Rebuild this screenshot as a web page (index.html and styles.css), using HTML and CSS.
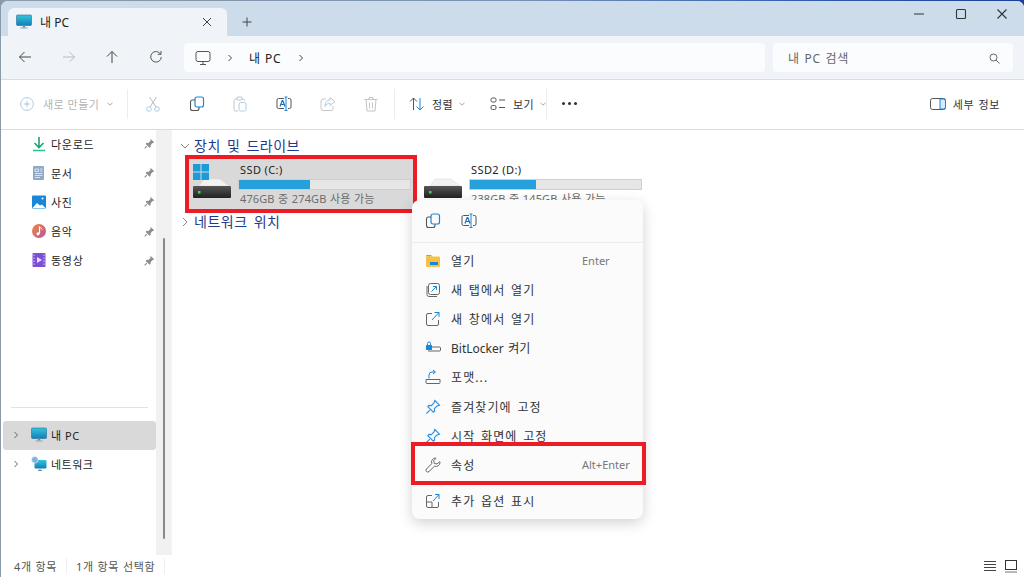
FILE: index.html
```html
<!DOCTYPE html>
<html lang="ko">
<head>
  <meta charset="UTF-8">
  <title>내 PC</title>
  <link rel="stylesheet" href="styles.css">
</head>
<body>

<svg class="defs" width="0" height="0">
  <defs>
    <linearGradient id="screen" x1="0" y1="0" x2="0" y2="1">
      <stop offset="0" stop-color="#35c4dd"/>
      <stop offset="1" stop-color="#0f7fb8"/>
    </linearGradient>
    <linearGradient id="hdd" x1="0" y1="0" x2="0" y2="1">
      <stop offset="0" stop-color="#555"/>
      <stop offset="1" stop-color="#222"/>
    </linearGradient>
    <linearGradient id="music" x1="0" y1="0" x2="1" y2="1">
      <stop offset="0" stop-color="#ef8a3c"/>
      <stop offset="1" stop-color="#b9549c"/>
    </linearGradient>
    <symbol id="pc" viewBox="0 0 16 16">
      <rect x="0.5" y="1" width="15" height="10.5" rx="1" fill="url(#screen)" stroke="#2a6f90" stroke-width="0.6"/>
      <rect x="6.8" y="11.5" width="2.4" height="2" fill="#6d8fa3"/>
      <rect x="4.5" y="13.5" width="7" height="1" fill="#8aa3b3"/>
    </symbol>
    <symbol id="pin" viewBox="0 0 12 12">
      <path d="M7 1.5l3.5 3.5-1.6.6-1.9 2 .1 1.7-1 .7-3.6-3.6.7-1 1.7.1 2-1.9z" fill="#8b8f94"/>
      <path d="M3.6 8.4L1.5 10.5" stroke="#8b8f94" fill="none"/>
    </symbol>
    <symbol id="copy" viewBox="0 0 16 16">
      <rect x="6" y="1" width="8.5" height="10" rx="2" fill="none" stroke="#1a86d8" stroke-width="1.2"/>
      <path d="M6 4H3.5A2 2 0 0 0 1.5 6v6.5a2 2 0 0 0 2 2H8a2 2 0 0 0 2-2V11" fill="none" stroke="#555" stroke-width="1.1"/>
    </symbol>
    <symbol id="rename" viewBox="0 0 16 16">
      <path d="M8 2.5H2.5a1.5 1.5 0 0 0-1.5 1.5v7a1.5 1.5 0 0 0 1.5 1.5H8M12 2.5h1.5A1.5 1.5 0 0 1 15 4v7a1.5 1.5 0 0 1-1.5 1.5H12" fill="none" stroke="#555"/>
      <path d="M4 10.5l2.2-6h.6l2.2 6M4.8 8.5h3.4" fill="none" stroke="#1a6fc0" stroke-width="1.2"/>
      <path d="M8.5 1h3M8.5 14.5h3M10 1v13.5" fill="none" stroke="#1a86d8"/>
    </symbol>
    <symbol id="chev" viewBox="0 0 8 8">
      <path d="M2.5 1l3 3-3 3" fill="none" stroke="currentColor" stroke-width="1"/>
    </symbol>
    <symbol id="down" viewBox="0 0 8 8">
      <path d="M1.5 2.8L4 5.2l2.5-2.4" fill="none" stroke="currentColor"/>
    </symbol>
    <symbol id="drive" viewBox="0 0 40 36">
      <path d="M8 16L13 9h16l9 7z" fill="#f2f2f2" stroke="#d4d4d4" stroke-width="0.5"/>
      <rect x="2" y="16" width="38" height="12" rx="1" fill="url(#hdd)"/>
      <rect x="7" y="21" width="2.5" height="2.5" fill="#3ddc4b"/>
    </symbol>
    <symbol id="menupin" viewBox="0 0 16 16">
      <path d="M9.8 1.5l4.7 4.7-2.5.8-2.6 2.7.2 2.5-1.2 1-5.6-5.6 1-1.2 2.5.2 2.7-2.6zM4.8 11.2L1.5 14.5" fill="none" stroke="#2b8fe0" stroke-width="1.1"/>
    </symbol>
  </defs>
</svg>

<div class="window">

  <header class="titlebar">
    <div class="tab">
      <svg class="ico16" width="16" height="16"><use href="#pc"/></svg>
      <span class="tab-name">내 PC</span>
      <svg class="tab-x" width="10" height="10" viewBox="0 0 10 10"><path d="M1 1l8 8M9 1l-8 8" stroke="#444" fill="none"/></svg>
    </div>
    <svg class="tab-plus" width="10" height="10" viewBox="0 0 10 10"><path d="M5 .5v9M.5 5h9" stroke="#444" fill="none"/></svg>
    <div class="winbtns">
      <svg width="12" height="12" viewBox="0 0 12 12"><path d="M1 6h10" stroke="#333" stroke-width="1.1"/></svg>
      <svg width="12" height="12" viewBox="0 0 12 12"><rect x="1.5" y="1.5" width="9" height="9" rx="1" fill="none" stroke="#333" stroke-width="1.1"/></svg>
      <svg width="12" height="12" viewBox="0 0 12 12"><path d="M1.5 1.5l9 9M10.5 1.5l-9 9" stroke="#333" stroke-width="1.1" fill="none"/></svg>
    </div>
  </header>

  <nav class="navbar">
    <div class="navbtns">
      <svg width="14" height="14" viewBox="0 0 14 14"><path d="M13 7H1.5M6.5 2l-5 5 5 5" fill="none" stroke="#444"/></svg>
      <svg width="14" height="14" viewBox="0 0 14 14"><path d="M1 7h11.5M7.5 2l5 5-5 5" fill="none" stroke="#b9bdc2"/></svg>
      <svg width="14" height="14" viewBox="0 0 14 14"><path d="M7 13V1.5M2 6.500l5-5 5 5" fill="none" stroke="#444"/></svg>
      <svg width="14" height="14" viewBox="0 0 14 14"><path d="M11.500 4A5.300 5.300 0 1 0 12.300 7M12 1v3.300H8.700" fill="none" stroke="#555"/></svg>
    </div>
    <div class="address">
      <svg width="16" height="16" viewBox="0 0 16 16"><rect x="1" y="1.500" width="14" height="10" rx="2" fill="none" stroke="#555"/><path d="M8 11.500v2.500M5 14.500h6" stroke="#555" fill="none"/></svg>
      <svg class="addr-chev" width="8" height="8"><use href="#chev"/></svg>
      <span class="addr-name">내 PC</span>
      <svg class="addr-chev" width="8" height="8"><use href="#chev"/></svg>
    </div>
    <div class="search">
      <span>내 PC 검색</span>
      <svg width="11" height="11" viewBox="0 0 11 11"><circle cx="4.500" cy="4.500" r="3.500" fill="none" stroke="#666"/><path d="M7 7l3.500 3.500" stroke="#666" fill="none"/></svg>
    </div>
  </nav>

  <div class="toolbar">
    <div class="tool-new">
      <svg width="14" height="14" viewBox="0 0 14 14"><circle cx="7" cy="7" r="6.400" fill="none" stroke="#b5c9dc"/><path d="M7 4v6M4 7h6" stroke="#a9c7e2" fill="none"/></svg>
      <span>새로 만들기</span>
      <svg class="caret" width="8" height="8"><use href="#down"/></svg>
    </div>
    <i class="sep"></i>
    <div class="tool-icons">
      <svg width="16" height="16" viewBox="0 0 16 16"><path d="M4.500 1l6.500 10M11.500 1L5 11" fill="none" stroke="#bcbcbc"/><circle cx="4" cy="13" r="2.300" fill="none" stroke="#a9cdec"/><circle cx="12" cy="13" r="2.300" fill="none" stroke="#a9cdec"/></svg>
      <svg width="16" height="16"><use href="#copy"/></svg>
      <svg width="16" height="16" viewBox="0 0 16 16"><path d="M5 3H3.500A1.500 1.500 0 0 0 2 4.500v9A1.500 1.500 0 0 0 3.500 15H6M10 3h1A1.500 1.500 0 0 1 12.500 4.500V5" fill="none" stroke="#c4c4c4"/><rect x="5" y="1" width="5" height="3" rx="1" fill="none" stroke="#c4c4c4"/><rect x="7" y="6.500" width="7" height="8.500" rx="1.500" fill="none" stroke="#a9cdec"/></svg>
      <svg width="16" height="16"><use href="#rename"/></svg>
      <svg width="16" height="16" viewBox="0 0 16 16"><path d="M6 3H3a2 2 0 0 0-2 2v7.500a2 2 0 0 0 2 2h8a2 2 0 0 0 2-2V10" fill="none" stroke="#c8c8c8"/><path d="M10 1.500l5 4-5 4V7.200C7.500 7.200 6 8.500 5 10.500 5 6.500 7 4 10 3.800z" fill="none" stroke="#a9cdec"/></svg>
      <svg width="16" height="16" viewBox="0 0 16 16"><path d="M1.500 3.500h13M6 3.500V1.500h4v2M3 3.500l1 11.500h8l1-11.500M6.500 6.500v6M9.500 6.500v6" fill="none" stroke="#c4c4c4"/></svg>
    </div>
    <i class="sep sep-b"></i>
    <div class="tool-text tool-sort">
      <svg width="16" height="14" viewBox="0 0 16 14"><path d="M4.500 13V1M1 4.500L4.500 1 8 4.500" fill="none" stroke="#555"/><path d="M11 1v12M7.500 9.500L11 13l3.500-3.500" fill="none" stroke="#1a86d8"/></svg>
      <span>정렬</span>
      <svg class="caret" width="8" height="8"><use href="#down"/></svg>
    </div>
    <div class="tool-text tool-view">
      <svg width="16" height="14" viewBox="0 0 16 14"><rect x="1" y="1" width="5" height="4" rx="1.500" fill="none" stroke="#555"/><rect x="1" y="8.500" width="5" height="4" rx="1.500" fill="none" stroke="#555"/><path d="M9 3h6M9 10.500h6" stroke="#555" fill="none"/></svg>
      <span>보기</span>
      <svg class="caret" width="8" height="8"><use href="#down"/></svg>
    </div>
    <i class="sep sep-c"></i>
    <div class="dots"><b></b><b></b><b></b></div>
    <div class="tool-details">
      <svg width="16" height="12" viewBox="0 0 16 12"><rect x="0.500" y="0.500" width="15" height="11" rx="2" fill="none" stroke="#555"/><path d="M10 1h3.500a2 2 0 0 1 2 2v6a2 2 0 0 1-2 2H10z" fill="#d7ebfa" stroke="#1a86d8"/></svg>
      <span>세부 정보</span>
    </div>
  </div>

  <div class="main">
    <aside class="sidebar">
      <ul class="quick">
        <li>
          <svg width="16" height="16" viewBox="0 0 16 16"><path d="M8 1v10M3.500 7L8 11.500 12.500 7" fill="none" stroke="#1aa37a" stroke-width="1.600"/><path d="M2 14.500h12" stroke="#2bc38f" stroke-width="1.600"/></svg>
          <span>다운로드</span>
          <svg class="pin" width="13" height="13"><use href="#pin"/></svg>
        </li>
        <li>
          <svg width="16" height="16" viewBox="0 0 16 16"><rect x="2" y="1" width="11" height="14" rx="1" fill="#8fa9c6"/><path d="M4 4h3.500v2.500H4zM9 4h2.500M9 6h2.500M4 8.500h7.500M4 10.500h7.500M4 12.500h5" stroke="#eef3f8" fill="none" stroke-width="0.800"/></svg>
          <span>문서</span>
          <svg class="pin" width="13" height="13"><use href="#pin"/></svg>
        </li>
        <li>
          <svg width="16" height="16" viewBox="0 0 16 16"><rect x="1" y="1.500" width="14" height="13" rx="1" fill="#1a86d8"/><path d="M1.500 14L6 9l3 2.500 2-1 3.500 3.500z" fill="#fff"/><circle cx="11.500" cy="4.500" r="1" fill="#fff"/></svg>
          <span>사진</span>
          <svg class="pin" width="13" height="13"><use href="#pin"/></svg>
        </li>
        <li>
          <svg width="16" height="16" viewBox="0 0 16 16"><circle cx="8" cy="8" r="7" fill="url(#music)"/><path d="M8.500 3.500v7" stroke="#fff" stroke-width="1.200"/><circle cx="7" cy="10.800" r="1.600" fill="#fff"/><path d="M8.500 3.500c.5 1.500 2.500 1.500 2.500 3" stroke="#fff" fill="none"/></svg>
          <span>음악</span>
          <svg class="pin" width="13" height="13"><use href="#pin"/></svg>
        </li>
        <li>
          <svg width="16" height="16" viewBox="0 0 16 16"><rect x="1.500" y="1" width="13" height="14" rx="1" fill="#7d4fd6"/><path d="M6 5l5 3-5 3z" fill="#e9dcff"/><path d="M3 2.500v11M13 2.500v11" stroke="#d7c4f7" stroke-dasharray="1.500 1.500"/></svg>
          <span>동영상</span>
          <svg class="pin" width="13" height="13"><use href="#pin"/></svg>
        </li>
      </ul>
      <hr class="side-line">
      <ul class="tree">
        <li class="current">
          <svg class="tree-chev" width="8" height="8"><use href="#chev"/></svg>
          <svg width="16" height="16"><use href="#pc"/></svg>
          <span>내 PC</span>
        </li>
        <li>
          <svg class="tree-chev" width="8" height="8"><use href="#chev"/></svg>
          <svg width="16" height="16" viewBox="0 0 16 16"><rect x="3.500" y="4" width="12" height="8.500" rx="1" fill="url(#screen)"/><path d="M9 12.500v1.500M7 14.500h4" stroke="#6d8fa3"/><circle cx="3.800" cy="3.800" r="3.300" fill="#7fb4de" stroke="#fff" stroke-width="0.500"/></svg>
          <span>네트워크</span>
        </li>
      </ul>
    </aside>
    <div class="scrollbar"><i></i></div>

    <section class="content">
      <h3 class="group">
        <svg width="10" height="10" viewBox="0 0 10 10"><path d="M1 3l4 4 4-4" fill="none" stroke="#888"/></svg>
        장치 및 드라이브
      </h3>
      <div class="drives">
        <div class="drive selected">
          <div class="drive-ico">
            <svg class="drive-svg" width="40" height="36"><use href="#drive"/></svg>
            <svg class="win-logo" width="16" height="16" viewBox="0 0 16 16"><path d="M0 0h7.500v7.500H0zM8.500 0H16v7.500H8.500zM0 8.500h7.500V16H0zM8.500 8.500H16V16H8.500z" fill="#1c9bd8"/></svg>
          </div>
          <div class="drive-info">
            <div class="drive-name">SSD (C:)</div>
            <div class="meter"><div class="fill" style="width:41.500%"></div></div>
            <div class="drive-free">476GB 중 274GB 사용 가능</div>
          </div>
        </div>
        <div class="drive">
          <div class="drive-ico">
            <svg class="drive-svg" width="40" height="36"><use href="#drive"/></svg>
          </div>
          <div class="drive-info">
            <div class="drive-name">SSD2 (D:)</div>
            <div class="meter"><div class="fill" style="width:38.500%"></div></div>
            <div class="drive-free">238GB 중 145GB 사용 가능</div>
          </div>
        </div>
      </div>
      <h3 class="group group-net">
        <svg width="10" height="10" viewBox="0 0 10 10"><path d="M3 1l4 4-4 4" fill="none" stroke="#888"/></svg>
        네트워크 위치
      </h3>
    </section>
  </div>

  <footer class="statusbar">
    <span>4개 항목</span>
    <i></i>
    <span>1개 항목 선택함</span>
    <i></i>
    <div class="views">
      <svg width="14" height="12" viewBox="0 0 14 12"><path d="M1 1.500h12M1 4.500h12M1 7.500h12M1 10.500h12" stroke="#444" fill="none"/></svg>
      <svg width="14" height="14" viewBox="0 0 14 14"><rect x="1.500" y="1.500" width="11" height="9" fill="none" stroke="#333"/><path d="M1 13h12" stroke="#777"/></svg>
    </div>
  </footer>

  <div class="red-box box-drive"></div>

  <div class="ctx">
    <div class="ctx-top">
      <svg width="16" height="16"><use href="#copy"/></svg>
      <svg width="16" height="16"><use href="#rename"/></svg>
    </div>
    <ul class="ctx-list">
      <li>
        <svg width="16" height="16" viewBox="0 0 16 16"><path d="M1 3a1 1 0 0 1 1-1h4l1.500 1.500H1z" fill="#d89b14"/><rect x="1" y="3.500" width="14" height="10.500" rx="1" fill="#f5c344"/><rect x="5" y="9" width="8" height="3" fill="#1a86d8"/></svg>
        <span class="lbl">열기</span><span class="key">Enter</span>
      </li>
      <li>
        <svg width="16" height="16" viewBox="0 0 16 16"><rect x="3.500" y="1.500" width="11" height="11" rx="2" fill="none" stroke="#666"/><path d="M2 4v8.500A2 2 0 0 0 4 14.500h8" fill="none" stroke="#666"/><path d="M6.500 9.500l5-5M8 4.500h3.500V8" fill="none" stroke="#1a86d8"/></svg>
        <span class="lbl">새 탭에서 열기</span>
      </li>
      <li>
        <svg width="16" height="16" viewBox="0 0 16 16"><path d="M7 2.500H3A1.500 1.500 0 0 0 1.500 4v9A1.500 1.500 0 0 0 3 14.500h9a1.500 1.500 0 0 0 1.500-1.500V9" fill="none" stroke="#666"/><path d="M7 9l7-7.500M9.500 1.500h4.500V6" fill="none" stroke="#1a86d8"/></svg>
        <span class="lbl">새 창에서 열기</span>
      </li>
      <li>
        <svg width="16" height="16" viewBox="0 0 16 16"><rect x="1" y="5" width="6" height="5" rx="0.500" fill="#1a86d8"/><path d="M2.500 5V3.500a1.500 1.500 0 0 1 3 0V5" fill="none" stroke="#1a86d8"/><path d="M7 7h7.500a1 1 0 0 1 1 1v2a1 1 0 0 1-1 1H3" fill="none" stroke="#666"/></svg>
        <span class="lbl lbl-latin">BitLocker 켜기</span>
      </li>
      <li>
        <svg width="16" height="16" viewBox="0 0 16 16"><path d="M1 10.500h14v3a1 1 0 0 1-1 1H2a1 1 0 0 1-1-1z" fill="none" stroke="#666"/><path d="M4 9.500V6a3 3 0 0 1 3-3h3M8 1l2.500 2L8 5" fill="none" stroke="#1a86d8"/></svg>
        <span class="lbl">포맷...</span>
      </li>
      <li>
        <svg width="16" height="16"><use href="#menupin"/></svg>
        <span class="lbl">즐겨찾기에 고정</span>
      </li>
      <li>
        <svg width="16" height="16"><use href="#menupin"/></svg>
        <span class="lbl">시작 화면에 고정</span>
      </li>
      <li>
        <svg width="16" height="16" viewBox="0 0 16 16"><path d="M10.500 1a4 4 0 0 0-3.700 5.500L1.500 12a1.700 1.700 0 0 0 2.500 2.500l5.500-5.300A4 4 0 0 0 15 5.500l-.3-.8-2.700 2.300-2.700-.6-.6-2.700 2.300-2.400z" fill="none" stroke="#666"/></svg>
        <span class="lbl">속성</span><span class="key">Alt+Enter</span>
      </li>
    </ul>
    <div class="ctx-more">
      <svg width="16" height="16" viewBox="0 0 16 16"><path d="M7 2.500H3A1.500 1.500 0 0 0 1.500 4v9A1.500 1.500 0 0 0 3 14.500h9a1.500 1.500 0 0 0 1.500-1.500V9M1.500 9H7v5.500" fill="none" stroke="#666"/><path d="M8 8l6-6.500M10 1.500h4V6" fill="none" stroke="#1a86d8"/></svg>
      <span class="lbl">추가 옵션 표시</span>
    </div>
  </div>

  <div class="red-box box-prop"></div>
</div>

</body>
</html>
```

FILE: styles.css
```css
* {
  box-sizing: border-box;
}

html,
body {
  margin: 0;
  height: 100%;
  overflow: hidden;
}

body {
  background: linear-gradient(90deg, #8a9aa8 0%, #7a93b5 50%, #2a5cb0 80%, #1b3f96 100%);
  font-family: "Noto Sans", "Noto Sans CJK KR", sans-serif;
  font-size: 12px;
  color: #222;
}

.defs {
  position: absolute;
}

svg {
  display: block;
  flex: none;
}

ul {
  list-style: none;
  margin: 0;
  padding: 0;
}

.window {
  position: relative;
  width: 1023px;
  height: 576px;
  margin: 1px 0 0 1px;
  background: #fff;
  border-radius: 7px 7px 0 0;
  overflow: hidden;
  display: flex;
  flex-direction: column;
}

/* title bar */
.titlebar {
  height: 35px;
  flex: none;
  background: #cddcea;
  display: flex;
  align-items: flex-end;
  padding-left: 7px;
}

.tab {
  width: 219px;
  height: 28px;
  background: #f0f4f9;
  border-radius: 6px 6px 0 0;
  display: flex;
  align-items: center;
  padding: 0 15px 0 8px;
  font-size: 12px;
}

.tab-name {
  margin-left: 8px;
  flex: 1;
  color: #222;
}

.tab-plus {
  margin: 0 0 9px 15px;
}

.winbtns {
  margin-left: auto;
  align-self: flex-start;
  display: flex;
  gap: 29.500px;
  padding: 7px 16px 0 0;
}

/* nav bar */
.navbar {
  height: 44px;
  flex: none;
  background: #f0f4f9;
  border-bottom: 1px solid #d9dde1;
  display: flex;
  align-items: center;
  padding: 0 10px 1px 0;
}

.navbtns {
  display: flex;
  gap: 29.700px;
  padding-left: 17px;
  width: 183px;
}

.address {
  width: 581px;
  height: 29px;
  background: #fafcfe;
  border-radius: 4px;
  display: flex;
  align-items: center;
  padding: 2px 0 0 11px;
}

.addr-chev {
  color: #444;
  margin-left: 15px;
}

.addr-name {
  margin: 0 0 0 15px;
  color: #222;
  letter-spacing: 0.9px;
}

.addr-name + .addr-chev {
  margin-left: 15px;
}

.search {
  width: 240px;
  height: 29px;
  margin-left: 8px;
  background: #fafcfe;
  border-radius: 4px;
  display: flex;
  align-items: center;
  justify-content: space-between;
  padding: 2px 13px 0 15px;
  color: #666;
  letter-spacing: 0.7px;
  word-spacing: 1px;
}

/* command bar */
.toolbar {
  height: 50px;
  flex: none;
  background: #fff;
  border-bottom: 1px solid #d9dde1;
  display: flex;
  align-items: center;
  padding: 0 0 2px 19px;
  font-size: 11px;
  letter-spacing: 0.5px;
}

.tool-new {
  display: flex;
  align-items: center;
  gap: 9px;
  color: #b4b4b4;
  width: 107px;
}

.caret {
  color: #aaa;
  margin-left: -2px;
}

.sep {
  width: 1px;
  height: 30px;
  background: #ececec;
  flex: none;
}

.tool-icons {
  display: flex;
  gap: 27.700px;
  padding-left: 17px;
  width: 266px;
}

.tool-text {
  display: flex;
  align-items: center;
  gap: 7px;
  color: #333;
}

.tool-sort {
  margin-left: 14px;
  width: 81px;
}

.tool-sort span,
.tool-view span {
  white-space: nowrap;
}

.tool-view {
  width: 56px;
}

.dots {
  margin-left: 15px;
  display: flex;
  gap: 3px;
}

.dots b {
  width: 3px;
  height: 3px;
  border-radius: 50%;
  background: #333;
}

.tool-details {
  margin-left: auto;
  padding-right: 24px;
  display: flex;
  align-items: center;
  gap: 7px;
  color: #333;
  letter-spacing: 0.6px;
  word-spacing: 1px;
}

/* main area */
.main {
  flex: 1;
  min-height: 0;
  display: flex;
}

.sidebar {
  width: 155px;
  flex: none;
  padding-left: 2px;
}

.quick {
  margin-top: -1px;
}

.quick li {
  height: 29.200px;
  display: flex;
  align-items: center;
  padding-left: 28px;
  gap: 4px;
  color: #222;
  font-size: 11px;
  letter-spacing: 0.7px;
}

.quick .pin {
  margin-left: auto;
}

.side-line {
  margin: 132px 8px 0;
  border: 0;
  border-top: 1px solid #e2e2e2;
}

.tree {
  margin-top: 13px;
}

.tree li {
  height: 29px;
  display: flex;
  align-items: center;
  padding-left: 9px;
  border-radius: 3px;
  font-size: 11px;
  letter-spacing: 0.5px;
}

.tree .current {
  background: #d9d9d9;
}

.tree-chev {
  color: #666;
  margin-right: 11px;
}

.tree li span {
  margin-left: 4px;
}

.scrollbar {
  width: 15px;
  flex: none;
  background: #f1f1f1;
  padding: 108px 0 16px 6.500px;
}

.scrollbar i {
  display: block;
  width: 2px;
  height: 100%;
  background: #8a8a8a;
  border-radius: 1px;
}

.content {
  flex: 1;
  border-left: 1px solid #f3f3f3;
  padding: 6px 0 0 8px;
}

.group {
  margin: 0;
  display: flex;
  align-items: center;
  gap: 4px;
  font-size: 14px;
  font-weight: 400;
  line-height: 20px;
  color: #1e3a8a;
  letter-spacing: 0.5px;
  word-spacing: 2px;
}

.group-net {
  margin-top: 3px;
}

.drives {
  display: flex;
  gap: 4px;
  margin: 3px 0 0 8px;
}

.drive {
  width: 227px;
  height: 50px;
  display: flex;
  padding-left: 3px;
  flex: none;
}

.drive.selected {
  background: #d9d9d9;
}

.drive-ico {
  position: relative;
  width: 48px;
  flex: none;
  padding-top: 11px;
}

.win-logo {
  position: absolute;
  top: 5px;
  left: 2px;
}

.drive-info {
  width: 172px;
}

.drive-name {
  font-size: 11px;
  line-height: 16px;
  margin: 3px 0 0 1px;
  color: #222;
  letter-spacing: 0.4px;
}

.meter {
  height: 11px;
  margin: 1px 0 0 -1px;
  background: #e6e6e6;
  border: 1px solid #cfcfcf;
}

.fill {
  height: 100%;
  background: #26a0da;
}

.drive-free {
  font-size: 11px;
  line-height: 16px;
  margin: 1px 0 0 1px;
  color: #6d6d6d;
  white-space: nowrap;
  letter-spacing: 0.12px;
  word-spacing: 0.5px;
}

/* status bar */
.statusbar {
  height: 22px;
  flex: none;
  display: flex;
  align-items: center;
  padding-left: 13px;
  font-size: 11px;
  color: #555;
  background: #fff;
  letter-spacing: 0.6px;
  word-spacing: 0.5px;
}

.statusbar > i {
  width: 1px;
  height: 16px;
  background: #efefef;
  margin: 0 9px;
}

.views {
  margin-left: auto;
  display: flex;
  align-items: center;
  gap: 7px;
  padding-right: 6px;
}

/* context menu */
.ctx {
  position: absolute;
  left: 411px;
  top: 199px;
  width: 231px;
  height: 319px;
  background: #fbfbfb;
  border-radius: 8px;
  box-shadow: 0 4px 14px rgba(0, 0, 0, 0.18);
  font-size: 12px;
  color: #333;
}

.ctx-top {
  height: 43px;
  display: flex;
  align-items: center;
  gap: 20px;
  padding-left: 13px;
  border-bottom: 1px solid #ececec;
}

.ctx-list {
  padding-top: 3px;
}

.ctx-list li,
.ctx-more {
  height: 29.200px;
  display: flex;
  align-items: center;
  padding-left: 13px;
}

.lbl {
  margin-left: 10px;
  width: 131px;
  white-space: nowrap;
  letter-spacing: 1.100px;
  word-spacing: 1.500px;
}

.lbl-latin {
  letter-spacing: 0;
}

.key {
  font-size: 11px;
  color: #777;
}

.ctx-more {
  margin-top: 7px;
}

/* red marks painted on the screenshot */
.red-box {
  position: absolute;
  border: 4px solid #ed1c24;
  pointer-events: none;
}

.box-drive {
  left: 184px;
  top: 154px;
  width: 232px;
  height: 58px;
}

.box-prop {
  left: 410px;
  top: 441px;
  width: 235px;
  height: 43px;
}
```
